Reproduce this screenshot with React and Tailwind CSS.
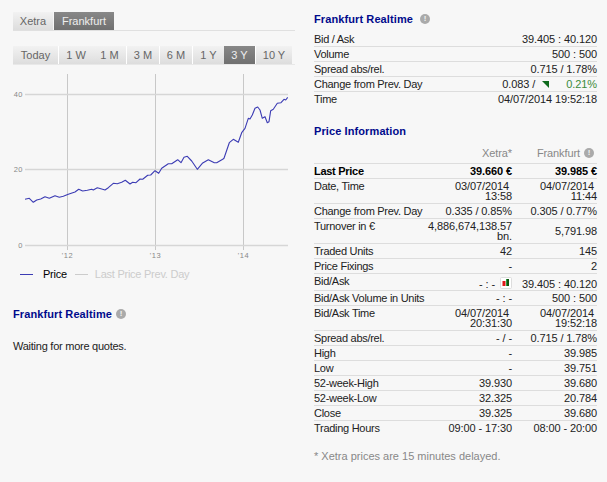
const PTS = "75,358 88,355 100,367 110,360 122,357 135,350 148,355 165,347 178,352 190,349 205,343 225,336 236,328 248,333 262,331 275,328 280,330 292,323 305,327 315,330 325,323 340,310 352,311 365,307 376,301 390,312 398,307 408,308 420,297 428,298 443,286 452,285 465,272 476,280 485,265 505,251 515,251 533,239 543,248 552,232 562,229 575,243 592,268 607,250 625,239 643,248 650,248 668,238 672,235 688,188 700,178 715,187 725,158 735,145 745,115 750,117 757,105 765,85 773,81 780,90 787,115 795,110 802,128 807,125 812,92 820,88 832,70 843,68 852,58 857,60 863,52";

const RANGES = [
  { label: "Today", w: "w-[46px]", sep: true },
  { label: "1 W", w: "w-[34px]" },
  { label: "1 M", w: "w-[34px]", sep: true },
  { label: "3 M", w: "w-[33px]", sep: true },
  { label: "6 M", w: "w-[33px]", sep: true },
  { label: "1 Y", w: "w-[31px]" },
  { label: "3 Y", w: "w-[32px]", active: true, sep: true },
  { label: "10 Y", w: "w-[36px]" },
];

function Info({ className = "" }) {
  return (
    <span className={`inline-flex w-[10px] h-[10px] rounded-full bg-[#aaaaaa] text-[#f0f0f0] text-[8px] leading-[10px] font-bold items-center justify-center tracking-normal ${className}`}>
      !
    </span>
  );
}

function Heading({ children }) {
  return (
    <h2 className="flex items-center text-[11px] leading-[14px] font-bold tracking-[0.1px] text-[#000a8c]">
      {children}
    </h2>
  );
}

function Row({ label, a, b, bold, last }) {
  return (
    <div
      className={`grid grid-cols-[113px_85px_85px] py-[2px] border-[#dddddd] ${last ? "" : "border-b"} ${bold ? "font-bold text-black" : ""}`}
    >
      <div className="whitespace-nowrap tracking-[-0.28px]">{label}</div>
      <div className="text-right self-start">{a}</div>
      <div className="text-right self-center">{b}</div>
    </div>
  );
}

function Line({ label, value, last }) {
  return (
    <div className={`flex justify-between py-[2px] border-[#dddddd] ${last ? "" : "border-b"}`}>
      <span className="tracking-[-0.28px]">{label}</span>
      <span className="whitespace-pre">{value}</span>
    </div>
  );
}

// points were read off the page at 3x, x / 3 and 80 + y / 3 give page pixels
function Chart() {
  const points = PTS.split(" ")
    .map((p) => {
      const [x, y] = p.split(",");
      return `${(x / 3).toFixed(1)},${(80 + y / 3).toFixed(1)}`;
    })
    .join(" ");
  return (
    <svg width="282" height="186" viewBox="13 74 282 186" className="block">
      {[67.5, 155.5, 243.5].map((x) => (
        <line key={x} x1={x} x2={x} y1="74" y2="250" stroke="#c8c8c8" strokeWidth="1" />
      ))}
      {[94.5, 169.5, 245.5].map((y) => (
        <line key={y} x1="25" x2="288" y1={y} y2={y} stroke="#d6d6d6" strokeWidth="1.4" />
      ))}
      <polyline points={points} fill="none" stroke="#3c3cb4" strokeWidth="1.1" strokeLinejoin="round" />
      <g fill="#888888" fontSize="7.5" fontFamily="'Liberation Sans', sans-serif" letterSpacing="0.5">
        <text x="23" y="96.5" textAnchor="end">40</text>
        <text x="23" y="171.5" textAnchor="end">20</text>
        <text x="23" y="247.5" textAnchor="end">0</text>
        <text x="67.5" y="258" textAnchor="middle">'12</text>
        <text x="155.5" y="258" textAnchor="middle">'13</text>
        <text x="243.5" y="258" textAnchor="middle">'14</text>
      </g>
    </svg>
  );
}

export default function App() {
  return (
    <div className="flex w-[607px] h-[482px] overflow-hidden bg-[#f7f7f7] pl-[13px] font-['Liberation_Sans',sans-serif] text-[11px] leading-[10px] tracking-[-0.1px] text-[#222222]">
      <div className="w-[282px] pt-[12px]">
        <div className="flex gap-px border-b border-[#e0e0e0] leading-[18px] tracking-normal h-[19px]">
          <div className="w-[40px] text-center text-[#666666] bg-gradient-to-b from-[#f2f2f2] to-[#dddddd]">Xetra</div>
          <div className="w-[60px] text-center text-[#eeeeee] bg-gradient-to-b from-[#888888] to-[#707070]">Frankfurt</div>
        </div>
        <div className="flex mt-[15px] border-b border-[#e8e8e8] leading-[18px] tracking-normal h-[19px]">
          {RANGES.map((r) => (
            <div
              key={r.label}
              className={`${r.w} text-center border-white ${r.sep ? "border-r" : ""} ${r.active ? "text-[#eeeeee] bg-gradient-to-b from-[#888888] to-[#707070]" : "text-[#666666] bg-gradient-to-b from-[#f2f2f2] to-[#dddddd]"}`}
            >
              {r.label}
            </div>
          ))}
        </div>
        <div className="mt-[9px]">
          <Chart />
        </div>
        <div className="flex items-center mt-[8px] pl-[7px] leading-[12px] tracking-[-0.25px]">
          <span className="w-[13px] h-[1px] bg-[#3c3cb4]"></span>
          <span className="ml-[10px] text-black">Price</span>
          <span className="ml-[8px] w-[13px] h-[1px] bg-[#cccccc]"></span>
          <span className="ml-[7px] text-[#cccccc]">Last Price Prev. Day</span>
        </div>
        <div className="mt-[27px]">
          <Heading>
            Frankfurt Realtime <Info className="ml-[4px]" />
          </Heading>
        </div>
        <p className="mt-[20px] tracking-[-0.25px]">Waiting for more quotes.</p>
      </div>

      <div className="w-[283px] ml-[19px] pt-[12px]">
        <Heading>
          Frankfurt Realtime <Info className="ml-[7px]" />
        </Heading>
        <div className="mt-[6px]">
          <Line label="Bid / Ask" value="39.405 : 40.120" />
          <Line label="Volume" value="500 : 500" />
          <Line label="Spread abs/rel." value="0.715 / 1.78%" />
          <div className="flex justify-between py-[2px] border-b border-[#dddddd]">
            <span className="tracking-[-0.28px]">Change from Prev. Day</span>
            <span className="flex items-center">
              0.083 /
              <svg width="7" height="7" viewBox="0 0 7 7" className="ml-[7px] mr-[17px]">
                <path d="M0 0H7V7Z" fill="#0f6b1e" />
              </svg>
              <span className="text-[#3b8b3b]">0.21%</span>
            </span>
          </div>
          <Line label="Time" value="04/07/2014 19:52:18" last />
        </div>

        <div className="mt-[18px]">
          <Heading>Price Information</Heading>
        </div>
        <div className="mt-[8px]">
          <div className="grid grid-cols-[113px_85px_85px] pt-[2px] pb-[5px] border-b border-[#dddddd] text-[#888888]">
            <div></div>
            <div className="text-right">Xetra*</div>
            <div className="flex justify-end items-center pr-[3px]">Frankfurt <Info className="ml-[4px]" /></div>
          </div>
          <Row bold label="Last Price" a="39.660 €" b="39.985 €" />
          <Row label="Date, Time" a={<>03/07/2014&nbsp;<br />13:58</>} b={<>04/07/2014&nbsp;<br />11:44</>} />
          <Row label="Change from Prev. Day" a="0.335 / 0.85%" b="0.305 / 0.77%" />
          <Row label="Turnover in €" a={<>4,886,674,138.57<br />bn.</>} b="5,791.98" />
          <Row label="Traded Units" a="42" b="145" />
          <Row label="Price Fixings" a="-" b="2" />
          <div className="grid grid-cols-[113px_85px_85px] h-[17px] pt-[2px] border-b border-[#dddddd]">
            <div className="tracking-[-0.28px]">Bid/Ask</div>
            <div className="flex justify-end items-start">
              <span className="mt-[3px] mr-[5px]">- : -</span>
              <svg width="12" height="12" viewBox="0 0 12 12" className="mt-px">
                <rect x="0.5" y="0.5" width="11" height="11" rx="1" fill="#ffffff" stroke="#dddddd" />
                <rect x="2.5" y="4" width="3" height="5" fill="#e01818" />
                <rect x="6" y="2" width="1" height="7" fill="#2aa040" />
                <rect x="7" y="2" width="2" height="7" fill="#115511" />
              </svg>
            </div>
            <div className="text-right mt-[3px]">39.405 : 40.120</div>
          </div>
          <Row label="Bid/Ask Volume in Units" a="- : -" b="500 : 500" />
          <Row label="Bid/Ask Time" a={<>04/07/2014&nbsp;<br />20:31:30</>} b={<>04/07/2014&nbsp;<br />19:52:18</>} />
          <Row label="Spread abs/rel." a="- / -" b="0.715 / 1.78%" />
          <Row label="High" a="-" b="39.985" />
          <Row label="Low" a="-" b="39.751" />
          <Row label="52-week-High" a="39.930" b="39.680" />
          <Row label="52-week-Low" a="32.325" b="20.784" />
          <Row label="Close" a="39.325" b="39.680" />
          <Row label="Trading Hours" a="09:00 - 17:30" b="08:00 - 20:00" last />
        </div>
        <p className="mt-[14px] text-[#888888] leading-[14px] tracking-normal">* Xetra prices are 15 minutes delayed.</p>
      </div>
    </div>
  );
}
